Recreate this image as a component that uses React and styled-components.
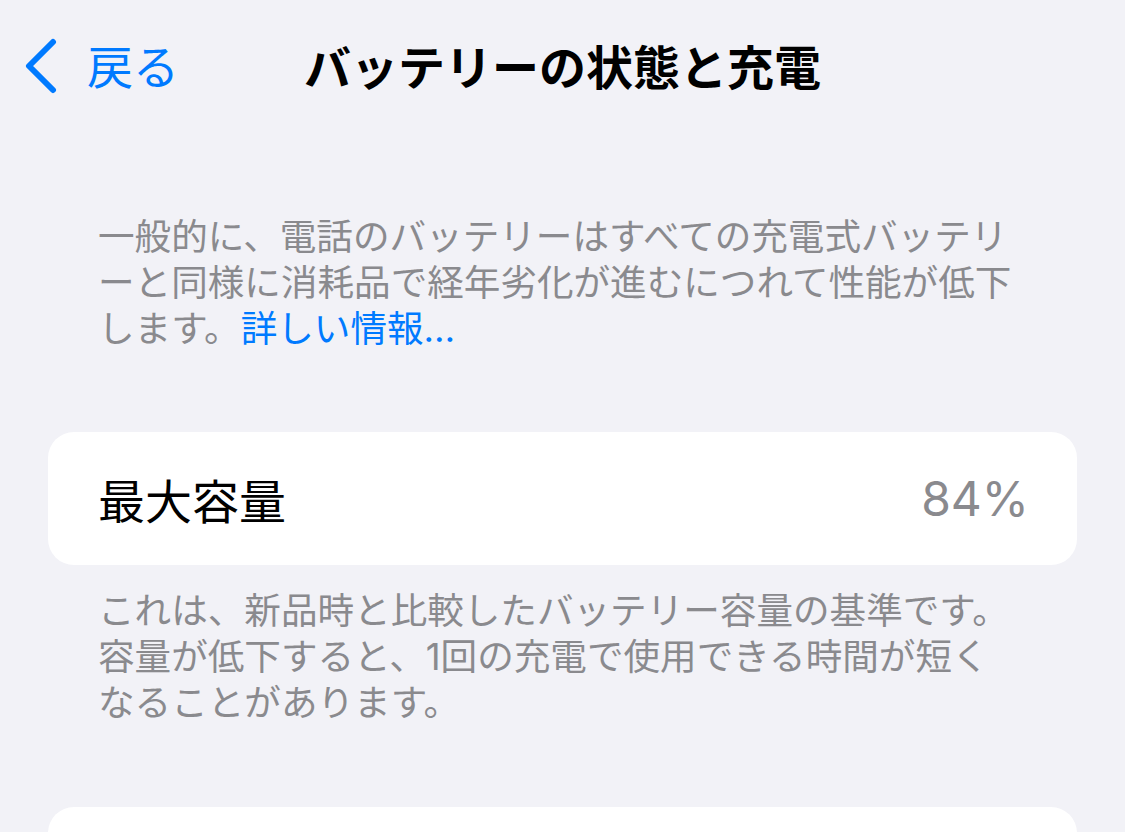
import React from 'react'
import styled, { createGlobalStyle } from 'styled-components'

const GlobalStyle = createGlobalStyle`
    html, body {
        margin: 0;
        padding: 0;
        background: #f2f2f7;
    }
    body {
        font-family: "Inter", "Noto Sans CJK JP", sans-serif;
        -webkit-font-smoothing: antialiased;
    }
`

function BackChevron() {
    return (
        <svg width="34" height="58" viewBox="0 0 34 58" fill="none">
            <polyline
                points="28,4 4,28 28,52"
                stroke="#007aff"
                strokeWidth="6"
                strokeLinecap="round"
                strokeLinejoin="round"
            />
        </svg>
    )
}

function App() {
    return (
        <Page>
            <GlobalStyle />
            <NavBar>
                <BackButton>
                    <BackChevron />
                    <span>戻る</span>
                </BackButton>
                <Title>バッテリーの状態と充電</Title>
                <div />
            </NavBar>

            <Intro>
                一般的に、電話のバッテリーはすべての充電式バッテリ<br />
                ーと同様に消耗品で経年劣化が進むにつれて性能が低下<br />
                します。<Link>詳しい情報…</Link>
            </Intro>

            <Card>
                <Label>最大容量</Label>
                <Value>84%</Value>
            </Card>
            <Footnote>
                これは、新品時と比較したバッテリー容量の基準です。<br />
                容量が低下すると、1回の充電で使用できる時間が短く<br />
                なることがあります。
            </Footnote>

            <Card tall />
        </Page>
    )
}

export default App

const Page = styled.div`
    width: 1125px;
    height: 832px;
    overflow: hidden;
    background: #f2f2f7;
`

const NavBar = styled.header`
    display: grid;
    grid-template-columns: 1fr auto 1fr;
    align-items: center;
    height: 134px;
`

const BackButton = styled.div`
    display: flex;
    align-items: center;
    gap: 28px;
    padding-left: 25px;
    color: #007aff;
    font-size: 46px;
    line-height: 1;
    cursor: pointer;
`

const Title = styled.h1`
    margin: 0;
    font-size: 47px;
    font-weight: 700;
    line-height: 1;
    color: #000;
`

const Intro = styled.p`
    margin: 80px 0 0;
    padding: 0 48px 0 98px;
    font-size: 36.6px;
    line-height: 46px;
    color: #8a8a8e;
    white-space: nowrap;
`

const Link = styled.span`
    color: #007aff;
`

const Card = styled.div`
    display: flex;
    align-items: center;
    justify-content: space-between;
    margin: ${props => props.tall ? '81px 48px 0' : '80px 48px 0'};
    height: ${props => props.tall ? '200px' : '133px'};
    padding: 0 48px 0 50px;
    background: #fff;
    border-radius: 26px;
`

const Label = styled.span`
    font-size: 47px;
    color: #000;
`

const Value = styled.span`
    font-size: 48px;
    color: #8a8a8e;
`

const Footnote = styled.p`
    margin: 23px 0 0;
    padding: 0 48px 0 98px;
    font-size: 36.6px;
    line-height: 46px;
    color: #8a8a8e;
    white-space: nowrap;
`
